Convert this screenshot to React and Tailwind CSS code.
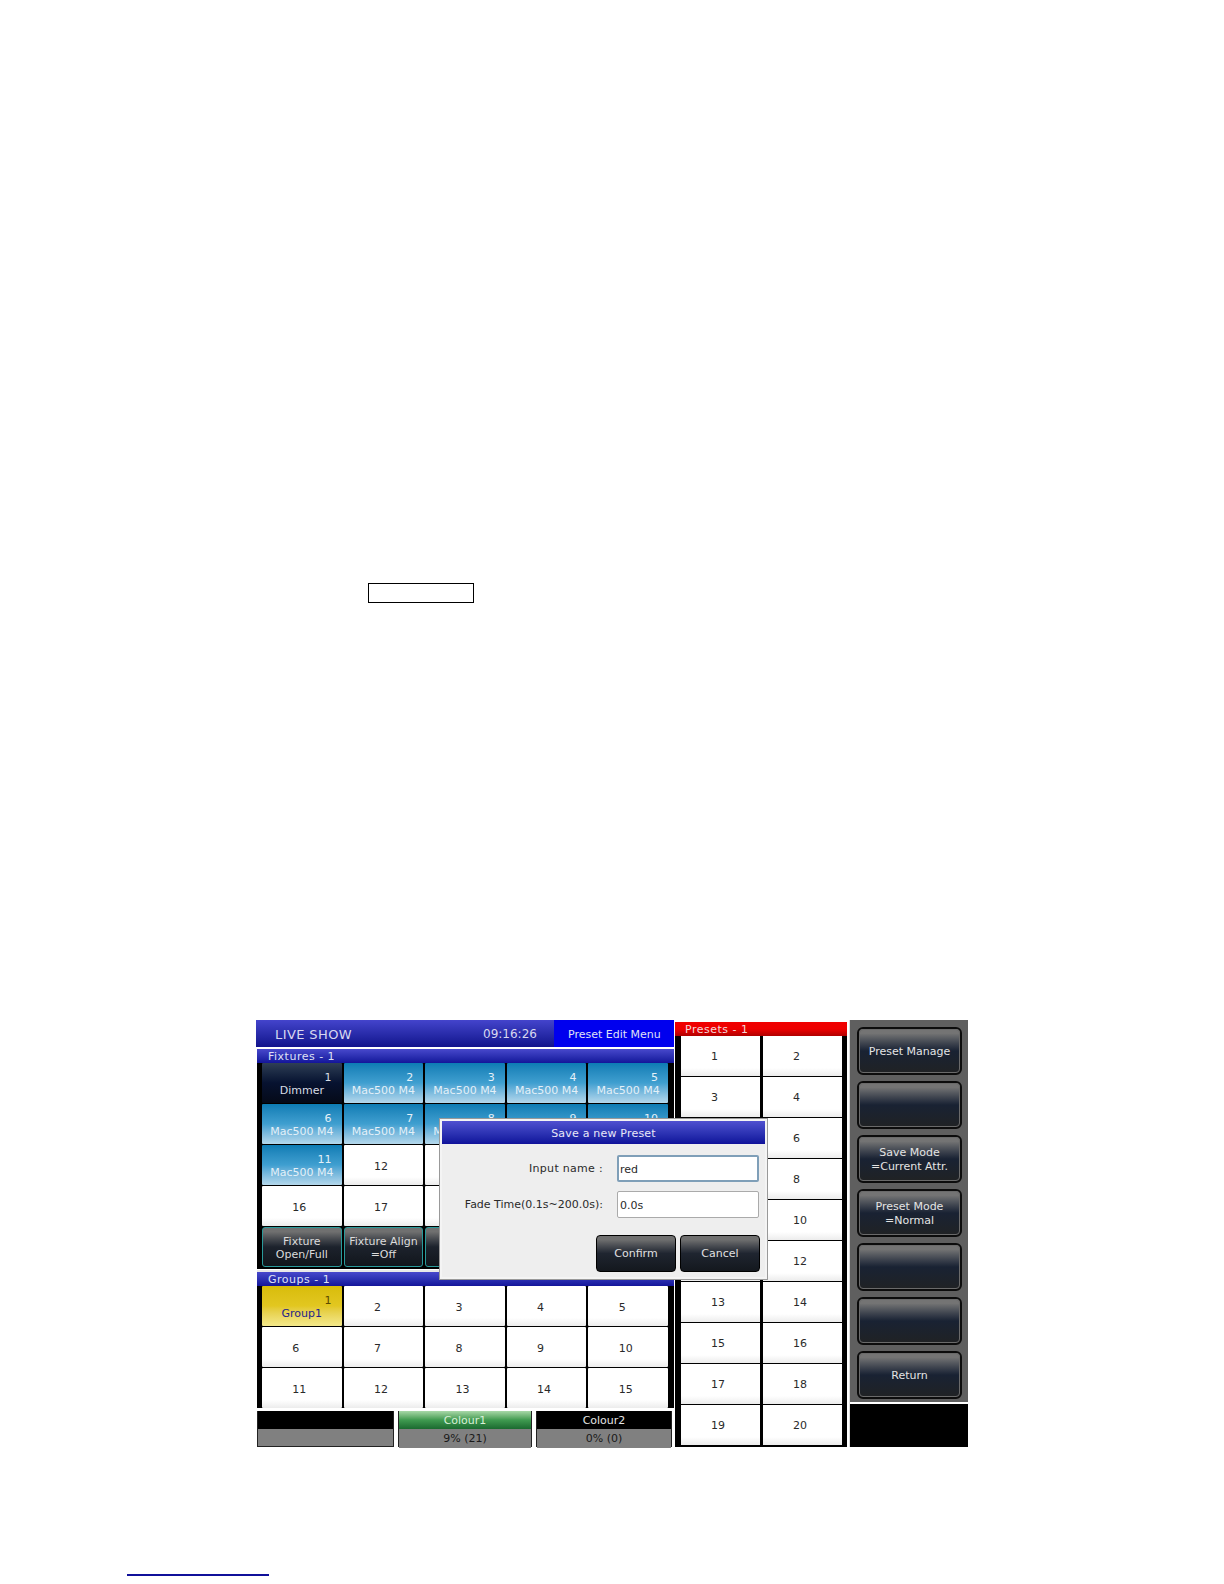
import React from "react";

const cellBase =
  "h-10 min-w-0 rounded-[1px] text-[11px] leading-[13px] flex flex-col justify-center";

// numbers sit in a two-digit box, so single digits lean left as on the console
const Num = ({ n }) => <span className="w-[15px] text-left whitespace-nowrap">{n}</span>;

const Cell = ({ n, label, kind = "plain", hidden }) => {
  if (kind === "plain") {
    return (
      <div className={`${cellBase} items-center pt-0.5 pr-1 bg-linear-to-b from-white via-white via-80% to-[#ececec] text-[#2a2a2a]`}>
        {!hidden && <Num n={n} />}
      </div>
    );
  }
  const styles = {
    blue: "bg-linear-to-b from-[#0b7cb4] via-[#3f9fd0] to-[#b4d8ec] text-[#e4f0f8]",
    dark: "bg-linear-to-b from-[#2f3f55] via-[#071230] to-[#050a18] text-[#d8dde4]",
    yellow: "bg-linear-to-b from-[#d8bc08] via-[#e2c720] to-[#f4e98a] text-[#24248a]",
  };
  return (
    <div className={`${cellBase} pt-0.5 ${styles[kind]}`}>
      <div className={`text-right pr-2.5 ${kind === "yellow" ? "text-[#5a4a00]" : ""}`}>{n}</div>
      <div className="text-center whitespace-nowrap">{label}</div>
    </div>
  );
};

const FuncButton = ({ label, sub }) => (
  <div className="h-10 min-w-0 pt-0.5 rounded-[3px] border border-[#2a9a9a] bg-linear-to-b from-[#707070] from-10% via-[#1c222c] via-50% to-[#12161c] text-[#dcdcdc] text-[11px] leading-[13px] flex flex-col items-center justify-center whitespace-nowrap">
    <div>{label}</div>
    <div>{sub}</div>
  </div>
);

const SideButton = ({ lines = [] }) => (
  <div className="h-12 pt-0.5 rounded-md border-2 border-[#0c0c0c] outline outline-1 -outline-offset-3 outline-[#6a6a6a] bg-linear-to-b from-[#747474] from-10% via-[#192233] via-50% to-[#202224] text-[#e4e4e4] text-[11px] leading-[14px] flex flex-col items-center justify-center">
    {lines.map((l) => (
      <div key={l}>{l}</div>
    ))}
  </div>
);

const TitleBar = ({ children }) => (
  <div className="h-[14px] pl-[11px] bg-linear-to-b from-[#4848cc] to-[#14149a] text-[#dfe0f5] text-[11px] leading-[15px] tracking-[0.5px]">
    {children}
  </div>
);

const Meter = ({ title, value, green, className }) => (
  <div className={`h-9 flex flex-col border-x border-b border-[#222] ${className}`}>
    <div className={`h-[18px] text-center text-[11px] leading-[20px] ${green ? "bg-linear-to-b from-[#a8d8a8] via-[#3f9a50] to-[#1a6a30] text-[#d8f0d8]" : "bg-black text-[#e4e4e4]"}`}>
      {title}
    </div>
    <div className="flex-1 bg-[#808080] text-center text-[11px] leading-[19px] text-[#1a1a1a]">{value}</div>
  </div>
);

const fixtures = [
  { n: 1, label: "Dimmer", kind: "dark" },
  ...[2, 3, 4, 5, 6, 7, 8, 9, 10, 11].map((n) => ({ n, label: "Mac500 M4", kind: "blue" })),
  ...[12, 13, 14, 15, 16, 17, 18, 19, 20].map((n) => ({ n, hidden: n % 5 > 2 || n % 5 === 0 })),
];

const groups = [
  { n: 1, label: "Group1", kind: "yellow" },
  ...[2, 3, 4, 5, 6, 7, 8, 9, 10, 11, 12, 13, 14, 15].map((n) => ({ n })),
];

const presets = Array.from({ length: 20 }, (_, i) => i + 1);
const underDialog = [5, 7, 9, 11];

const sideButtons = [
  ["Preset Manage"],
  [],
  ["Save Mode", "=Current Attr."],
  ["Preset Mode", "=Normal"],
  [],
  [],
  ["Return"],
];

export default function App() {
  return (
    <div className="relative h-[1584px] w-[1224px] overflow-hidden bg-white font-['DejaVu_Sans',sans-serif]">
      <div className="pt-[583px] pl-[368px]">
        <div className="h-[20px] w-[106px] border border-black" />
      </div>

      <div className="relative mt-[417px] ml-[256px] flex h-[427px] w-[712px] bg-white">
        {/* left column */}
        <div className="flex w-[418px] flex-col">
          <div className="flex h-[27px] bg-linear-to-b from-[#4444cc] to-[#12128c] text-[#d8d8f0] text-[12px] leading-[29px]">
            <div className="pl-[19px] text-[13px] tracking-[0.4px] w-[227px]">LIVE SHOW</div>
            <div className="w-[71px]">09:16:26</div>
            <div className="flex-1 bg-[#0000ee] pl-3.5 text-[#dfe0f5] text-[11px]">Preset Edit Menu</div>
          </div>

          <div className="mt-[2px] ml-px bg-black">
            <TitleBar>Fixtures - 1</TitleBar>
            <div className="grid grid-cols-5 gap-x-0.5 gap-y-px pl-[5px] pr-1.5 pb-[2px]">
              {fixtures.map((f) => (
                <Cell key={f.n} {...f} />
              ))}
              <FuncButton label="Fixture" sub="Open/Full" />
              <FuncButton label="Fixture Align" sub="=Off" />
              <FuncButton label="" sub="" />
              <FuncButton label="" sub="" />
              <FuncButton label="" sub="" />
            </div>
          </div>

          <div className="mt-px ml-px border-t-2 border-[#e8e8e8] bg-black">
            <TitleBar>Groups - 1</TitleBar>
            <div className="grid grid-cols-5 gap-x-0.5 gap-y-px pl-[5px] pr-1.5">
              {groups.map((g) => (
                <Cell key={g.n} {...g} />
              ))}
            </div>
          </div>

          <div className="mt-auto ml-px flex gap-[4px]">
            <Meter title="" value="" className="w-[137px]" />
            <Meter title="Colour1" value="9% (21)" green className="w-[134px]" />
            <Meter title="Colour2" value="0% (0)" className="w-[136px]" />
          </div>
        </div>

        {/* presets */}
        <div className="ml-px flex w-[172px] flex-col self-end h-[425px] bg-black">
          <div className="h-[14px] pl-[10px] bg-linear-to-b from-[#f00000] via-[#ee0000] to-[#b00000] text-[#f5d8d8] text-[11px] leading-[15px] tracking-[0.5px]">
            Presets - 1
          </div>
          <div className="grid grid-cols-2 gap-x-[3px] gap-y-px pl-1.5 pr-[5px]">
            {presets.map((n) => (
              <div key={n} className="h-10 flex items-center justify-center pt-0.5 pr-1 bg-linear-to-b from-white via-white via-80% to-[#ececec] text-[#2a2a2a] text-[11px]">
                {!underDialog.includes(n) && <Num n={n} />}
              </div>
            ))}
          </div>
        </div>

        {/* soft keys */}
        <div className="ml-[2px] flex flex-1 flex-col border-l border-[#ddd]">
          <div className="flex h-[382px] flex-col gap-[6px] bg-[#5f5f5f] pt-[7px] pl-[7px] pr-[6px]">
            {sideButtons.map((lines, i) => (
              <SideButton key={i} lines={lines} />
            ))}
          </div>
          <div className="mt-[2px] flex-1 bg-black" />
        </div>

        {/* dialog */}
        <div className="absolute left-[184px] top-[99px] h-[160px] w-[327px] border-2 border-[#f4f4f4] bg-[#eeeeee] outline outline-1 outline-[#999]">
          <div className="h-[23px] bg-linear-to-b from-[#5050d0] to-[#10109a] text-center text-[11px] leading-[25px] tracking-[0.2px] text-[#e8e8f8]">
            Save a new Preset
          </div>
          <div className="mt-[11px] flex flex-col gap-[9px] text-[11px] text-[#2a2a2a]">
            <div className="flex items-center">
              <div className="w-[161px] pt-0.5 text-right tracking-[0.3px]">Input name :</div>
              <div className="ml-3.5 h-[27px] w-[142px] rounded-[2px] border-2 border-[#7f9fb8] bg-white pl-[1px] leading-[25px]">red</div>
            </div>
            <div className="flex items-center">
              <div className="w-[161px] pt-0.5 text-right whitespace-nowrap">Fade Time(0.1s~200.0s):</div>
              <div className="ml-3.5 h-[27px] w-[142px] rounded-[2px] border border-[#aaa] bg-white pl-[2px] leading-[27px]">0.0s</div>
            </div>
          </div>
          <div className="mt-[17px] flex justify-end gap-1 pr-[5px]">
            {["Confirm", "Cancel"].map((t) => (
              <div key={t} className="flex h-[37px] w-20 items-center justify-center rounded-[4px] border border-black pt-0.5 bg-linear-to-b from-[#707070] from-10% via-[#1f2530] via-50% to-[#14181e] text-[11px] text-[#e0e0e0]">
                {t}
              </div>
            ))}
          </div>
        </div>
      </div>

      <div className="absolute left-[127px] top-[1574px] h-[2px] w-[142px] bg-[#10109a]" />
    </div>
  );
}
